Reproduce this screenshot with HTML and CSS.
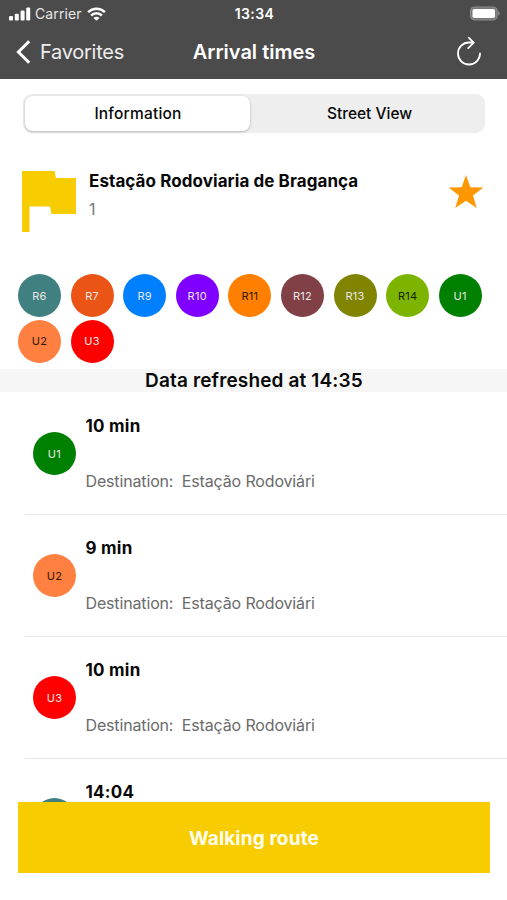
FILE: index.html
```html
<!DOCTYPE html>
<html lang="en">
<head>
<meta charset="utf-8">
<meta name="viewport" content="width=device-width, initial-scale=1">
<title>Arrival times</title>
<link rel="stylesheet" href="styles.css">
</head>
<body>
<div class="screen">
  <header class="top">
    <div class="status">
      <div class="carrier">
        <svg width="22" height="14" viewBox="0 0 22 14" fill="#fff"><rect x="0" y="9" width="4" height="4.6" rx="1"/><rect x="5.8" y="6.8" width="4" height="6.8" rx="1"/><rect x="11.6" y="3.6" width="4" height="10" rx="1"/><rect x="17.2" y="0.6" width="4" height="13" rx="1"/></svg>
        <span class="carrier-name">Carrier</span>
        <svg width="19" height="14" viewBox="0 0 19 14" fill="none" stroke="#fff" stroke-width="2.5"><path d="M1.1 5.2a12 12 0 0 1 16.8 0"/><path d="M4.1 8.5a7.7 7.7 0 0 1 10.8 0"/><path d="M9.5 13.8 6.5 10.9a4.2 4.2 0 0 1 6 0Z" fill="#fff" stroke="none"/></svg>
      </div>
      <span class="clock">13:34</span>
      <svg class="battery" width="31" height="15" viewBox="0 0 31 15"><rect x="1.6" y="1" width="26.5" height="12.8" rx="3.8" fill="#777" stroke="#8c8c8c" stroke-width="1.2"/><rect x="3.5" y="3" width="22.5" height="9" rx="1.8" fill="#fff"/><path d="M29.3 5c1.7.5 1.7 4.1 0 4.6z" fill="#999"/></svg>
    </div>
    <nav class="nav">
      <div class="back">
        <svg width="16" height="24" viewBox="0 0 16 24" fill="none" stroke="#fff" stroke-width="3"><path d="M14.2 1.3 3.4 12l10.8 10.7"/></svg>
        <span class="back-label">Favorites</span>
      </div>
      <h1 class="title">Arrival times</h1>
      <svg class="reload" width="26" height="30" viewBox="0 0 26 30" fill="none" stroke="#fff" stroke-width="1.8" stroke-linecap="round"><path d="M17.300 6.500H13A11 11 0 1 0 24 17.500"/><path d="m12.700 1.600 5 5-5.500 5.500" stroke-linejoin="round"/></svg>
    </nav>
  </header>

  <div class="segments">
    <div class="segment segment-active"><span>Information</span></div>
    <div class="segment"><span>Street View</span></div>
  </div>

  <section class="stop">
    <svg class="flag" width="54" height="61" viewBox="0 0 54 61" fill="#f7cc00"><path d="M0 0H32.5L34 7H54V43H29.5L28 35.500H7.500V61H0Z"/></svg>
    <div class="stop-text">
      <h2 class="stop-name">Estação Rodoviaria de Bragança</h2>
      <span class="stop-id">1</span>
    </div>
    <svg class="star" width="36" height="34" viewBox="0 0 36 34" fill="#ff9700"><path d="m18 0 4.300 12.200L35.300 12.500 25 20.500 28.700 33 18 25.700 7.300 33 11 20.500.7 12.500 13.700 12.200Z"/></svg>
  </section>

  <div class="lines">
    <span class="line r6">R6</span><span class="line r7">R7</span><span class="line r9">R9</span><span class="line r10">R10</span><span class="line r11">R11</span><span class="line r12">R12</span><span class="line r13">R13</span><span class="line r14">R14</span><span class="line u1">U1</span><span class="line u2">U2</span><span class="line u3">U3</span>
  </div>

  <div class="refreshed"><span>Data refreshed at 14:35</span></div>

  <main class="arrivals">
    <article class="arrival">
      <span class="line u1">U1</span>
      <div class="detail"><h3 class="time">10 min</h3><p class="dest"><span>Destination:</span><span>Estação Rodoviári</span></p></div>
    </article>
    <article class="arrival">
      <span class="line u2">U2</span>
      <div class="detail"><h3 class="time">9 min</h3><p class="dest"><span>Destination:</span><span>Estação Rodoviári</span></p></div>
    </article>
    <article class="arrival">
      <span class="line u3">U3</span>
      <div class="detail"><h3 class="time">10 min</h3><p class="dest"><span>Destination:</span><span>Estação Rodoviári</span></p></div>
    </article>
    <article class="arrival">
      <span class="line r6"></span>
      <div class="detail"><h3 class="time">14:04</h3></div>
    </article>
  </main>

  <footer class="footer"><div class="walk"><span>Walking route</span></div></footer>
</div>
</body>
</html>
```
FILE: styles.css
```css
* { box-sizing: border-box; margin: 0; padding: 0; }
body { background: #fff; font-family: Inter, "Liberation Sans", sans-serif; color: #080808; }
svg { display: block; flex: none; }
span, h1, h2, h3 { white-space: nowrap; }
.screen { width: 507px; height: 900px; display: flex; flex-direction: column; overflow: hidden; }

.top { height: 79px; flex: none; background: #4b4b4b; color: #fff; }
.status { height: 27px; display: grid; grid-template-columns: 1fr auto 1fr; align-items: center; padding: 0 7px 0 9px; }
.carrier { display: flex; align-items: center; gap: 4px; }
.carrier-name { font-size: 14px; color: #e6e6e6; margin-right: 1px; letter-spacing: .1px; }
.clock { font-size: 14px; font-weight: 600; letter-spacing: .4px; }
.battery { justify-self: end; }
.nav { height: 50px; display: grid; grid-template-columns: 1fr auto 1fr; align-items: center; padding: 0 25px 0 15px; }
.back { display: flex; align-items: center; gap: 9px; }
.back-label { font-size: 20px; color: #ededed; letter-spacing: -.27px; }
.title { font-size: 20px; font-weight: 600; letter-spacing: 0; margin: 0 -5.5px 0 5.5px; }
.reload { justify-self: end; margin-bottom: 3px; }

.segments { height: 39px; flex: none; margin: 15px 22px 0 23px; display: flex; background: #eee; border-radius: 9px; }
.segment { flex: 1; display: flex; align-items: center; justify-content: center; font-size: 15.5px; font-weight: 500; padding-left: 2px; }
.segment-active { flex: 0 0 225px; margin: 2px; padding-left: 1px; background: #fff; border-radius: 8px; box-shadow: 0 1px 3px rgba(0, 0, 0, .24); letter-spacing: .2px; }

.stop { height: 61px; flex: none; margin: 38px 23px 0 22px; display: flex; }
.stop-text { flex: 1; margin-left: 13px; }
.stop-name { font-size: 17px; line-height: 21px; font-weight: 700; letter-spacing: .08px; }
.stop-id { display: block; margin-top: 7px; font-size: 16px; line-height: 21px; color: #777; }
.star { margin-top: 4px; }

.lines { flex: none; height: 95px; margin: 42px 18px 0; display: flex; flex-wrap: wrap; align-content: flex-start; gap: 2.5px 9.6px; }
.line { width: 43px; height: 43px; flex: none; border-radius: 50%; display: flex; align-items: center; justify-content: center; font-size: 11px; letter-spacing: .3px; color: #e8e8e8; }
.r6 { background: #408080; }
.r7 { background: #ea5414; }
.r9 { background: #0080ff; }
.r10 { background: #8000ff; }
.r11 { background: #ff8000; color: #301800; }
.r12 { background: #804045; }
.r13 { background: #808400; }
.r14 { background: #7cb400; color: #182400; }
.u1 { background: #008000; }
.u2 { background: #ff8040; color: #301808; }
.u3 { background: #ff0000; }

.refreshed { height: 23px; flex: none; background: #f6f6f6; display: flex; align-items: center; justify-content: center; padding-left: 1px; font-size: 19px; font-weight: 600; letter-spacing: .15px; }

.arrivals { height: 410px; flex: none; overflow: hidden; padding-left: 25px; }
.arrival { height: 122px; display: flex; border-bottom: 1px solid #e8e8e8; padding: 0 0 0 8px; }
.arrival:first-child { height: 123px; padding-top: 1px; }
.arrival .line { margin-top: 39px; }
.detail { margin: 22px 0 0 9.5px; }
.time { font-size: 17px; line-height: 22px; font-weight: 700; letter-spacing: .25px; }
.dest { margin-top: 33px; font-size: 16px; line-height: 22px; color: #6b6b6b; display: flex; gap: 8.5px; letter-spacing: -.15px; }

.footer { flex: 1; padding: 0 17px 0 18px; }
.walk { height: 71px; background: #f7cc00; color: #fffff0; display: flex; align-items: center; justify-content: center; padding-top: 1px; font-size: 19px; font-weight: 700; letter-spacing: .15px; }
```
